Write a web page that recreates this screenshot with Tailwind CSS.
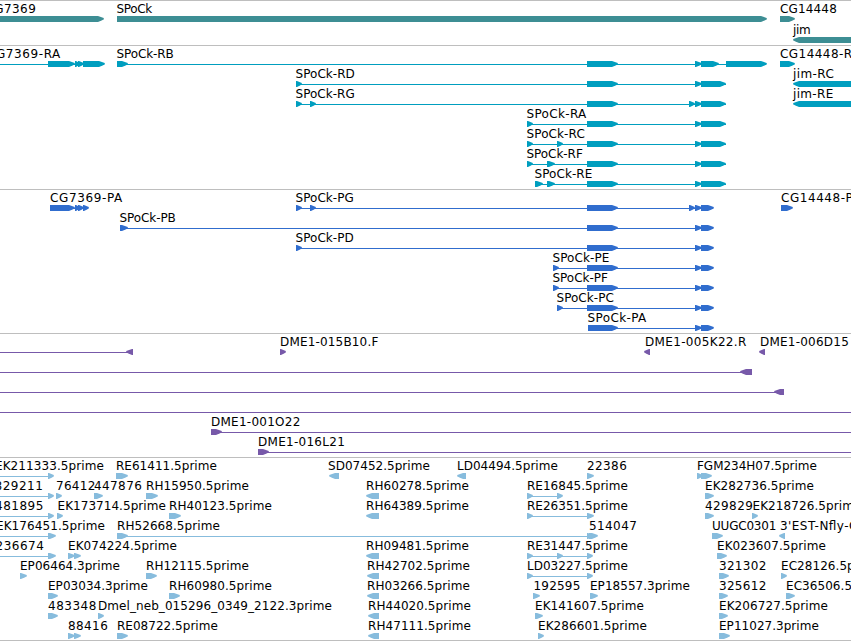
<!DOCTYPE html>
<html lang="en">
<head>
    <meta charset="UTF-8">
    <meta name="viewport" content="width=device-width, initial-scale=1.0">
    <title>Genome Browser - SPoCk</title>
    <script src="https://cdn.jsdelivr.net/npm/@tailwindcss/browser@4"></script>
</head>
<body class="bg-white overflow-hidden">

    <main class="w-[851px] h-[641px] flex flex-col overflow-hidden border-b border-[#bebebe]">
        <section class="h-[45px] shrink-0 border-t border-[#bebebe] text-[#3d8e94]" data-track="genes"></section>
        <section class="h-[144px] shrink-0 border-t border-[#bebebe] text-[#009ebf]" data-track="transcripts"></section>
        <section class="h-[144px] shrink-0 border-t border-[#bebebe] text-[#306dce]" data-track="proteins"></section>
        <section class="h-[124px] shrink-0 border-t border-[#bebebe] text-[#7759a9]" data-track="bacs"></section>
        <section class="h-[183px] shrink-0 border-t border-[#bebebe] text-[#87bcdd]" data-track="ests"></section>
    </main>

    <script>
        // feature: [label, label start, label end, blocks, connector, strand]
        // shared 3' exons of the SPoCk isoforms
        const rnaTail = [[587, 618], [695, 702], [701, 726]];
        const cdsTail = [[587, 618], [695, 702], [701, 714]];

        const tracks = {
            genes: { pitch: 21, rows: [
                [
                    ['CG7369', -14, 35.5, [[-20, 104]]],
                    ['SPoCk', 117, 152, [[117, 767]]],
                    ['CG14448', 780.5, 836.5, [[780, 795]]],
                ],
                [['jim', 793.5, 810.5, [[793, 870]], null, -1]],
            ] },
            transcripts: { pitch: 20, rows: [
                [
                    ['CG7369-RA', -12.5, 60, [[48, 75], [75, 80], [78, 84], [83, 105]], [-5, 104]],
                    ['SPoCk-RB', 117, 173.5, [[117, 128], [587, 618], [695, 702], [701, 719], [726, 767]], [117, 766]],
                    ['CG14448-RA', 780.5, 860, [[780, 795]]],
                ],
                [
                    ['SPoCk-RD', 296, 354.5, [[296, 302], ...rnaTail], [296, 726]],
                    ['jim-RC', 793.5, 833.5, [[793, 870]], null, -1],
                ],
                [
                    ['SPoCk-RG', 296, 354.5, [[296, 302], [310, 316], [689, 695], ...rnaTail], [296, 726]],
                    ['jim-RE', 793.5, 833, [[793, 870]], null, -1],
                ],
                [['SPoCk-RA', 527, 586, [[527, 533], ...rnaTail], [527, 726]]],
                [['SPoCk-RC', 527, 584.5, [[527, 533], [557, 563], ...rnaTail], [527, 726]]],
                [['SPoCk-RF', 527, 582.5, [[527, 533], [547, 555], ...rnaTail], [527, 726]]],
                [['SPoCk-RE', 535, 592, [[535, 543], [547, 555], ...rnaTail], [535, 726]]],
            ] },
            proteins: { pitch: 20, rows: [
                [
                    ['CG7369-PA', 50.5, 122, [[50, 75], [75, 80], [78, 84], [83, 89]], [50, 88]],
                    ['SPoCk-PG', 296, 353.5, [[296, 302], [310, 316], [689, 695], ...cdsTail], [296, 713]],
                    ['CG14448-PA', 781.5, 860.5, [[781, 793]]],
                ],
                [['SPoCk-PB', 120, 175.5, [[120, 128], ...cdsTail], [120, 713]]],
                [['SPoCk-PD', 296, 353.5, [[296, 302], ...cdsTail], [296, 713]]],
                [['SPoCk-PE', 553, 609, [[553, 559], ...cdsTail], [553, 713]]],
                [['SPoCk-PF', 553, 607.5, [[553, 559], ...cdsTail], [553, 713]]],
                [['SPoCk-PC', 557, 613.5, [[557, 563], ...cdsTail], [557, 713]]],
                [['SPoCk-PA', 588, 646, [[588, 618], [695, 702], [701, 714]], [588, 713]]],
            ] },
            bacs: { pitch: 20, rows: [
                [
                    ['', 0, 0, [[126, 133]], [0, 133], -1],
                    ['DME1-015B10.F', 280.5, 378, [[280, 286]]],
                    ['DME1-005K22.R', 645.5, 746, [[644, 650]], null, -1],
                    ['DME1-006D15', 760.5, 848.5, [[759, 765]], null, -1],
                ],
                [['', 0, 0, [[740, 752]], [0, 752], -1]],
                [['', 0, 0, [[774, 784]], [0, 784], -1]],
                [['', 0, 0, [], [0, 851]]],
                [['DME1-001O22', 211.5, 300, [[211, 222]], [211, 851]]],
                [['DME1-016L21', 258.5, 344.5, [[258, 269]], [258, 851]]],
            ] },
            ests: { pitch: 20, rows: [
                [
                    ['EK211333.5prime', -4.5, 103.5, [[48, 54]], [0, 50]],
                    ['RE61411.5prime', 116.5, 216.5, [[116, 128]]],
                    ['SD07452.5prime', 328.5, 429.5, [[329, 339]], null, -1],
                    ['LD04494.5prime', 457.5, 557.5, [[457, 466]], null, -1],
                    ['22386', 587.5, 626.5, [[587, 594]]],
                    ['FGM234H07.5prime', 697.5, 816.5, [[697, 703], [701, 712]]],
                ],
                [
                    ['829211', -5, 42.5, [[48, 54]], [0, 50]],
                    ['76412', 56.5, 95, [[56, 62]]],
                    ['447876', 94.5, 141.5, [[94, 103]]],
                    ['RH15950.5prime', 146.5, 248.5, [[146, 158]]],
                    ['RH60278.5prime', 366.5, 468.5, [[366, 379]], null, -1],
                    ['RE16845.5prime', 527.5, 627.5, [[527, 533], [557, 563]], [527, 560]],
                    ['EK282736.5prime', 705.5, 813.5, [[705, 714]]],
                ],
                [
                    ['481895', -4.5, 43, [[48, 54]], [0, 50]],
                    ['EK173714.5prime', 58, 165.5, [[57, 63]]],
                    ['RH40123.5prime', 169.5, 271.5, [[169, 181]]],
                    ['RH64389.5prime', 366.5, 468.5, [[366, 379]], null, -1],
                    ['RE26351.5prime', 527.5, 627.5, [[527, 533], [587, 594]], [527, 592]],
                    ['429829', 705.5, 752.5, [[705, 714]]],
                    ['EK218726.5prime', 753, 861, [[752, 758]]],
                ],
                [
                    ['EK176451.5prime', -3.5, 104.5, [[48, 56]], [0, 50]],
                    ['RH52668.5prime', 117.5, 219.5, [[117, 128], [587, 593], [589, 598]], [117, 596]],
                    ['514047', 589.5, 636.5, []],
                    ['UUGC0301', 712.5, 776, [[712, 723]]],
                    ["3'EST-Nfly-C", 780.5, 857, [[779, 785]], null, -1],
                ],
                [
                    ['236674', -4, 43.5, [[48, 56]], [0, 50]],
                    ['EK074224.5prime', 68.5, 176.5, [[68, 75], [74, 81]]],
                    ['RH09481.5prime', 366.5, 468.5, [[366, 379]], null, -1],
                    ['RE31447.5prime', 527.5, 627.5, [[527, 533], [557, 563], [587, 593]], [527, 592]],
                    ['EK023607.5prime', 717.5, 825.5, [[717, 727]]],
                ],
                [
                    ['EP06464.3prime', 20.5, 119.5, [[20, 27]]],
                    ['RH12115.5prime', 146.5, 248.5, [[146, 157]]],
                    ['RH42702.5prime', 367.5, 469.5, [[367, 379]], null, -1],
                    ['LD03227.5prime', 527.5, 627.5, [[527, 533], [587, 593]], [527, 592]],
                    ['321302', 719.5, 766, [[719, 729]]],
                    ['EC28126.5prime', 781.5, 882, [[781, 787]]],
                ],
                [
                    ['EP03034.3prime', 48.5, 147.5, [[48, 58]]],
                    ['RH60980.5prime', 169.5, 271.5, [[169, 180]]],
                    ['RH03266.5prime', 367.5, 469.5, [[367, 379]], null, -1],
                    ['192595', 534, 580, [[533, 540]]],
                    ['EP18557.3prime', 590.5, 689.5, [[590, 598]]],
                    ['325612', 719.5, 766, [[719, 728]]],
                    ['EC36506.5prime', 786.5, 887, [[786, 795]]],
                ],
                [
                    ['483348', 48.5, 96, [[48, 58]]],
                    ['Dmel_neb_015296_0349_2122.3prime', 98.5, 331.5, [[98, 104]]],
                    ['RH44020.5prime', 368.5, 470.5, [[368, 379]], null, -1],
                    ['EK141607.5prime', 535.5, 643.5, [[535, 543]]],
                    ['EK206727.5prime', 719.5, 827.5, [[719, 728]]],
                ],
                [
                    ['88416', 68.5, 107.5, [[68, 75], [74, 81]]],
                    ['RE08722.5prime', 117.5, 217.5, [[117, 128]]],
                    ['RH47111.5prime', 368.5, 470.5, [[368, 379]], null, -1],
                    ['EK286601.5prime', 538.5, 646.5, [[538, 544]]],
                    ['EP11027.3prime', 719.5, 818.5, [[719, 730]]],
                ],
            ] },
        };

        // six pixel high block with a tapered tip on the strand side
        const block = ([start, end], y, strand) => {
            const head = Math.min(6, end - start - 1);
            const tail = strand < 0 ? end : start;
            const tip = strand < 0 ? start : end;
            const neck = tip - strand * head;
            const points = [
                [tail, y], [neck, y],
                [tip - strand * head * 0.4, y + 1.3], [tip, y + 2.6], [tip, y + 3.2],
                [tip - strand * head * 0.4, y + 4.5], [neck, y + 6],
                [tail, y + 6],
            ];
            return `<polygon points="${points.join(' ')}" fill="currentColor" />`;
        };

        const renderFeature = ([label, from, to, blocks, connector, strand = 1], top) => `
            ${connector ? `<rect x="${connector[0]}" y="${top + 18}" width="${connector[1] - connector[0]}" height="1" fill="currentColor" />` : ''}
            ${blocks.map(b => block(b, top + 15, strand)).join('')}
            ${label ? `<text x="${from - 0.5}" y="${top + 12}" textLength="${to - from + 0.8}" class="fill-black">${label}</text>` : ''}
        `;

        document.querySelectorAll('[data-track]').forEach(section => {
            const { pitch, rows } = tracks[section.dataset.track];
            section.innerHTML = `
                <svg class="block w-full h-full font-['DejaVu_Sans',sans-serif] text-[12px]">
                    ${rows.map((row, i) => row.map(f => renderFeature(f, i * pitch)).join('')).join('')}
                </svg>
            `;
        });
    </script>
</body>
</html>
